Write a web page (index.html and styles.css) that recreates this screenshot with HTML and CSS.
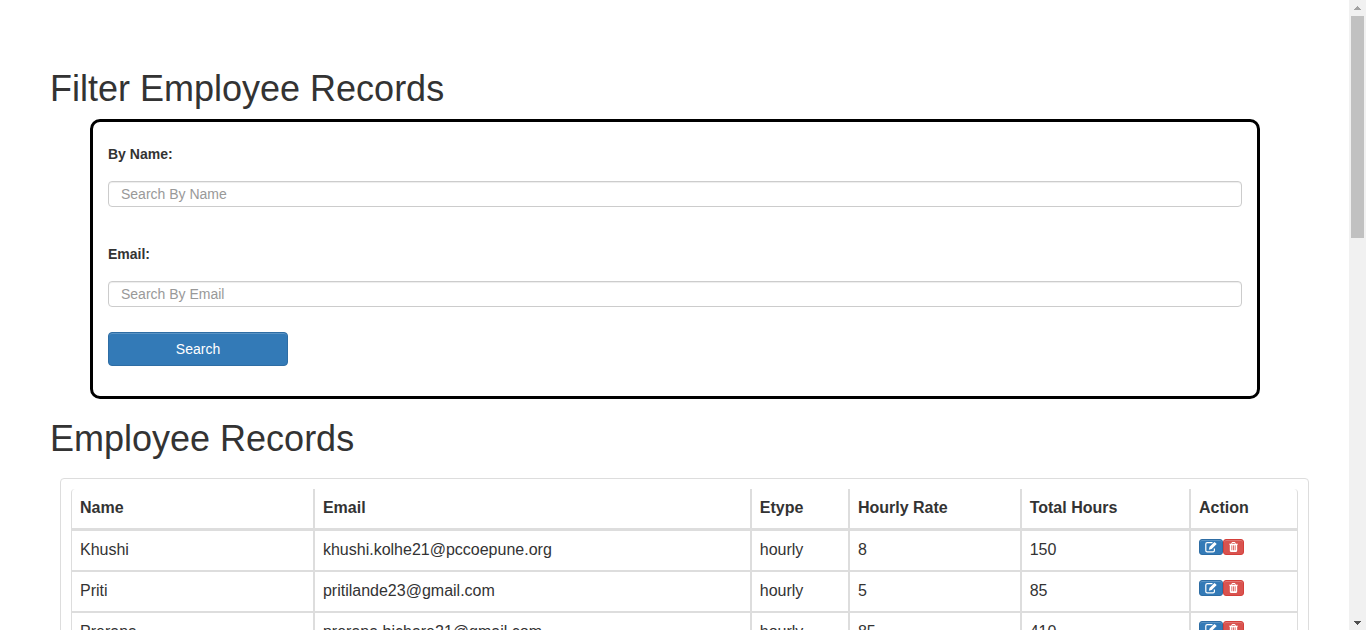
FILE: index.html
```html
<!DOCTYPE html>
<html lang="en">
<head>
<meta charset="utf-8">
<title>Employee Records</title>
<link rel="stylesheet" href="styles.css">
</head>
<body>
<svg class="sprite" aria-hidden="true">
  <symbol id="edit" viewBox="0 0 12 12"><path d="M7.500 1.700H2.200Q.8 1.700.8 3.100V9.400Q.8 10.800 2.200 10.800H8Q9.400 10.800 9.400 9.400V7.600" fill="none" stroke="currentColor" stroke-width="1.200"/><path d="M3.800 8.700L4.600 5.800 9.500.9 11.700 3.100 6.700 8Z"/></symbol>
  <symbol id="trash" viewBox="192 0 1408 1792"><path d="M704 1376v-704q0-14-9-23t-23-9h-64q-14 0-23 9t-9 23v704q0 14 9 23t23 9h64q14 0 23-9t9-23zm256 0v-704q0-14-9-23t-23-9h-64q-14 0-23 9t-9 23v704q0 14 9 23t23 9h64q14 0 23-9t9-23zm256 0v-704q0-14-9-23t-23-9h-64q-14 0-23 9t-9 23v704q0 14 9 23t23 9h64q14 0 23-9t9-23zm-544-992h448l-48-117q-7-9-17-11h-317q-10 2-17 11zm928 32v64q0 14-9 23t-23 9h-96v948q0 83-47 143.500t-113 60.500h-832q-66 0-113-58.500t-47-141.500v-952h-96q-14 0-23-9t-9-23v-64q0-14 9-23t23-9h309l70-167q15-37 54-63t79-26h320q40 0 79 26t54 63l70 167h309q14 0 23 9t9 23z"/></symbol>
</svg>
<div class="viewport">
  <main class="content">
    <h1 class="title">Filter Employee Records</h1>
    <form class="filter">
      <label class="filter-label" for="name">By Name:</label>
      <input class="filter-input" id="name" type="text" placeholder="Search By Name">
      <label class="filter-label filter-label-next" for="email">Email:</label>
      <input class="filter-input" id="email" type="text" placeholder="Search By Email">
      <button class="search" type="button">Search</button>
    </form>
    <h1 class="title title-records">Employee Records</h1>
    <section class="panel">
      <table class="records">
        <thead>
          <tr><th class="col-name">Name</th><th class="col-email">Email</th><th class="col-type">Etype</th><th class="col-rate">Hourly Rate</th><th class="col-hours">Total Hours</th><th class="col-action">Action</th></tr>
        </thead>
        <tbody>
          <tr><td>Khushi</td><td>khushi.kolhe21@pccoepune.org</td><td>hourly</td><td>8</td><td>150</td><td><div class="actions"><button class="act act-edit" type="button" aria-label="Edit"><svg class="icon icon-edit"><use href="#edit"/></svg></button><button class="act act-delete" type="button" aria-label="Delete"><svg class="icon icon-trash"><use href="#trash"/></svg></button></div></td></tr>
          <tr><td>Priti</td><td>pritilande23@gmail.com</td><td>hourly</td><td>5</td><td>85</td><td><div class="actions"><button class="act act-edit" type="button" aria-label="Edit"><svg class="icon icon-edit"><use href="#edit"/></svg></button><button class="act act-delete" type="button" aria-label="Delete"><svg class="icon icon-trash"><use href="#trash"/></svg></button></div></td></tr>
          <tr><td>Prerana</td><td>prerana.bichare21@gmail.com</td><td>hourly</td><td>85</td><td>410</td><td><div class="actions"><button class="act act-edit" type="button" aria-label="Edit"><svg class="icon icon-edit"><use href="#edit"/></svg></button><button class="act act-delete" type="button" aria-label="Delete"><svg class="icon icon-trash"><use href="#trash"/></svg></button></div></td></tr>
        </tbody>
      </table>
    </section>
  </main>
  <div class="scrollbar" aria-hidden="true">
    <svg class="arrow arrow-up" viewBox="0 0 7 4"><path d="M3 0h1v1h1v1h1v1h1v1H0V3h1V2h1V1h1z"/></svg>
    <div class="track"><div class="thumb"></div></div>
    <svg class="arrow arrow-down" viewBox="0 0 7 4"><path d="M0 0h7v1H6v1H5v1H4v1H3V3H2V2H1V1H0z"/></svg>
  </div>
</div>
</body>
</html>
```
FILE: styles.css
```css
*, *::before, *::after { box-sizing: border-box; }

body {
  margin: 0;
  background: #fff;
  color: #333;
  font: 14px/20px "Liberation Sans", Arial, sans-serif;
}

.sprite { display: none; }

.viewport {
  display: flex;
  height: 100vh;
  overflow: hidden;
}

.content {
  flex: 1;
  min-width: 0;
  padding: 69px 40px 0 50px;
  overflow: hidden;
}

.title {
  margin: 0 0 10px;
  font-size: 36px;
  font-weight: 500;
  line-height: 40px;
}

.title-records { margin: 20px 0 19px; }

.filter {
  display: flex;
  flex-direction: column;
  margin: 0 49px 0 40px;
  padding: 22px 15px 30px;
  border: 3px solid #000;
  border-radius: 10px;
}

.filter-label {
  align-self: flex-start;
  margin-bottom: 17px;
  font-weight: 700;
}

.filter-label-next { margin-top: 37px; }

.filter-input {
  width: 100%;
  height: 26px;
  padding: 0 12px;
  border: 1px solid #ccc;
  border-radius: 4px;
  background: #fff;
  box-shadow: inset 0 1px 1px rgba(0, 0, 0, .075);
  color: #555;
  font: inherit;
}

.filter-input::placeholder { color: #999; opacity: 1; }

.search {
  width: 180px;
  height: 34px;
  margin-top: 25px;
  padding: 0;
  border: 1px solid #2e6da4;
  border-radius: 4px;
  background: #337ab7;
  box-shadow: inset 0 1px 0 rgba(255, 255, 255, .2);
  color: #fff;
  font: inherit;
}

.panel {
  margin-left: 10px;
  padding: 10px;
  border: 1px solid #ddd;
  border-radius: 4px;
}

.records {
  width: 100%;
  border: 0;
  border-spacing: 0;
  table-layout: fixed;
  font-size: 16px;
  line-height: 22px;
}

.records th,
.records td {
  padding: 8px 8px 9px;
  border: 1px solid #ddd;
  text-align: left;
  vertical-align: top;
}

.records th {
  border-top: 0;
  border-bottom-width: 2px;
}

.records th:first-child { border-top-left-radius: 4px; }
.records th:last-child { border-top-right-radius: 4px; }

.col-name { width: 19.8%; }
.col-email { width: 35.6%; }
.col-type { width: 8%; }
.col-rate { width: 14%; }
.col-hours { width: 13.8%; }
.col-action { width: 8.8%; }

.actions { display: flex; height: 22px; align-items: flex-start; }

.act {
  display: flex;
  align-items: center;
  justify-content: center;
  height: 16px;
  padding: 0 5px;
  border: 1px solid;
  border-radius: 3px;
  box-shadow: inset 0 1px 0 rgba(255, 255, 255, .2);
  color: #fff;
}

.act-edit { width: 24px; background: #337ab7; border-color: #2e6da4; }
.act-delete { width: 21px; background: #d9534f; border-color: #d43f3a; }

.icon { display: block; flex: none; height: 12px; fill: currentColor; }
.icon-edit { width: 12px; }
.icon-trash { width: 9px; }

.scrollbar {
  display: flex;
  flex: none;
  flex-direction: column;
  align-items: center;
  width: 17px;
  padding: 6px 2px 5px;
  background: #f1f1f1;
}

.arrow { display: block; flex: none; width: 7px; height: 4px; }
.arrow-up { fill: #a3a3a3; }
.arrow-down { fill: #505050; }

.track { flex: 1; width: 100%; padding: 6px 0; }
.thumb { height: 37%; background: #c1c1c1; }
```
